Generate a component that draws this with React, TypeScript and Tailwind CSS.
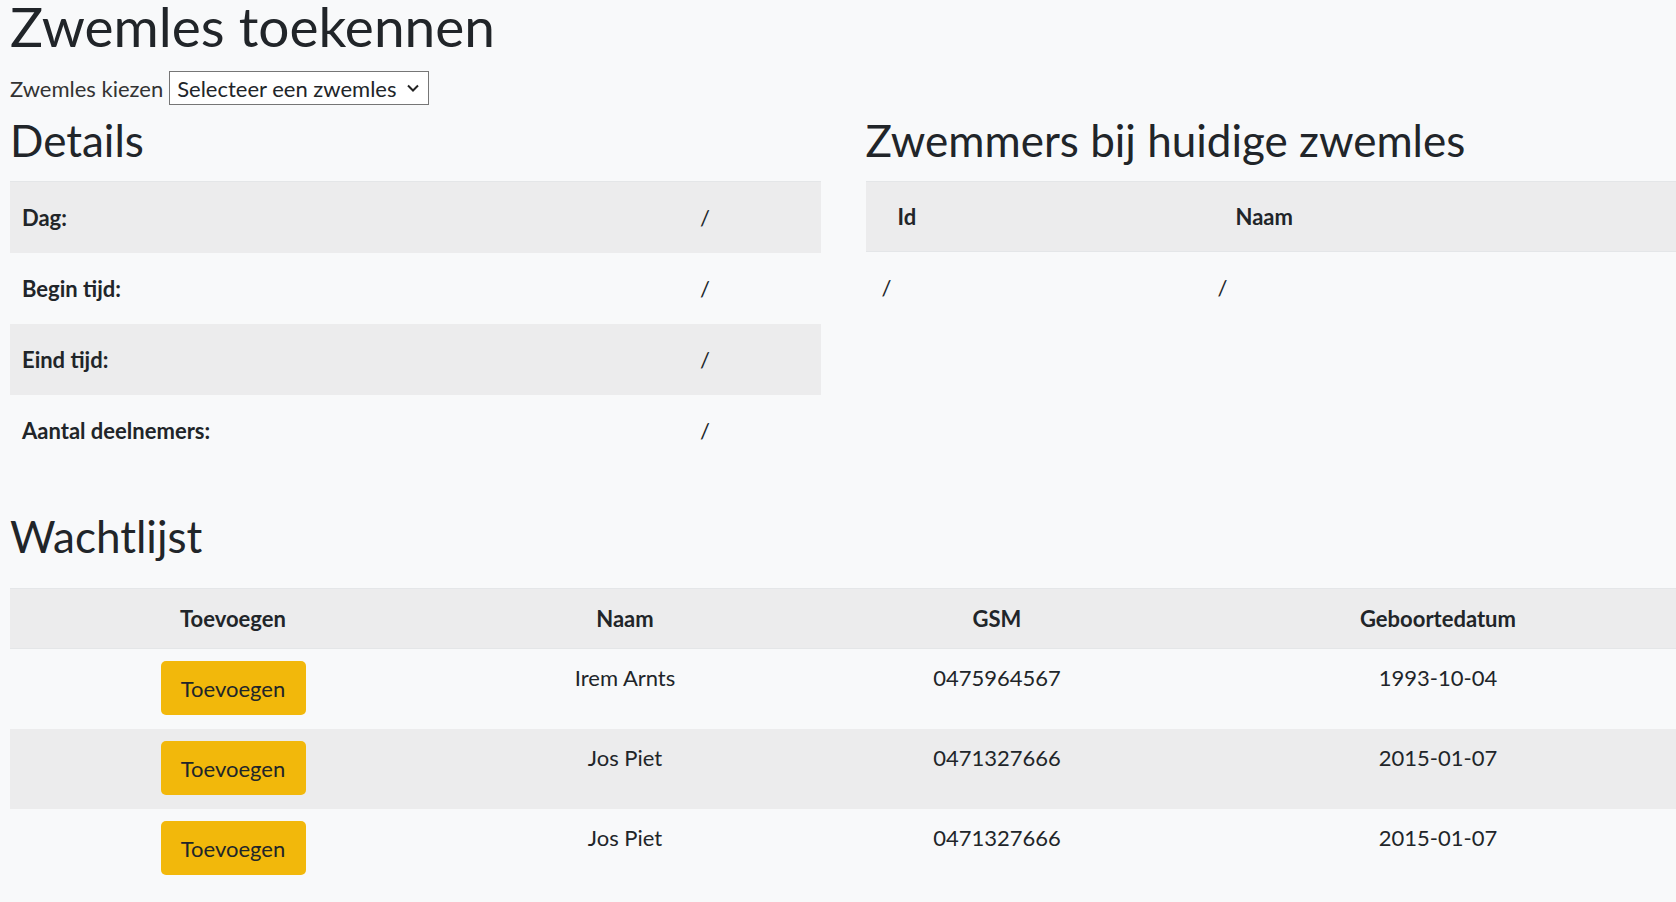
import React from 'react';

interface WachtItem {
  id: number;
  naam: string;
  gsm: string;
  geboortedatum: string;
}

const wachtlijst: WachtItem[] = [
  { id: 1, naam: 'Irem Arnts', gsm: '0475964567', geboortedatum: '1993-10-04' },
  { id: 2, naam: 'Jos Piet', gsm: '0471327666', geboortedatum: '2015-01-07' },
  { id: 3, naam: 'Jos Piet', gsm: '0471327666', geboortedatum: '2015-01-07' },
];

const details = ['Dag:', 'Begin tijd:', 'Eind tijd:', 'Aantal deelnemers:'];

export default function App() {
  return (
    <div
      className="min-h-screen bg-[#f8f9fa] pl-[10px] text-[#212529] text-[22px]"
      style={{ fontFamily: 'Lato, "Noto Sans", sans-serif' }}
    >
      <h1 className="text-[55px] leading-[52px] font-normal mb-[19px]">Zwemles toekennen</h1>

      <div className="flex items-center gap-[6px] h-[34px]">
        <label className="font-normal text-[#333]">Zwemles kiezen</label>
        <div className="flex items-center justify-between w-[260px] h-[34px] border border-[#767676] bg-white pl-[7px] pr-[9px]">
          <span>Selecteer een zwemles</span>
          <svg width="12" height="8" viewBox="0 0 12 8" fill="none">
            <path d="M1 1.5l5 5 5-5" stroke="#222" strokeWidth="2" />
          </svg>
        </div>
      </div>

      <div className="grid grid-cols-2 gap-[45px] mt-[11px]">
        <div>
          <h2 className="text-[44px] leading-[1.1] font-normal mb-[17px]">Details</h2>
          <table className="w-full border-collapse border-t border-[#e4e6e8]">
            <tbody>
              {details.map((d, i) => (
                <tr key={d} className={i % 2 === 0 ? 'bg-[#ececed]' : ''}>
                  <td className="w-[678px] h-[71px] pl-[12px] font-bold align-middle">{d}</td>
                  <td className="h-[71px] pl-[12px] align-middle">/</td>
                </tr>
              ))}
            </tbody>
          </table>
        </div>
        <div>
          <h2 className="text-[44px] leading-[1.1] font-normal mb-[17px]">Zwemmers bij huidige zwemles</h2>
          <table className="w-full border-collapse border-t border-[#e4e6e8]">
            <thead>
              <tr className="bg-[#ececed] border-b border-[#e4e6e8]">
                <th className="w-[334px] h-[70px] pl-[32px] text-left font-bold">Id</th>
                <th className="h-[70px] pl-[36px] text-left font-bold">Naam</th>
              </tr>
            </thead>
            <tbody>
              <tr>
                <td className="h-[71px] pl-[16px]">/</td>
                <td className="h-[71px] pl-[18px]">/</td>
              </tr>
            </tbody>
          </table>
        </div>
      </div>

      <h2 className="text-[44px] leading-[1.1] font-normal mt-[46px] mb-[28px]">Wachtlijst</h2>
      <table className="w-full border-collapse border-t border-[#e4e6e8] table-fixed">
        <thead>
          <tr className="bg-[#ececed] border-b border-[#e4e6e8]">
            <th className="w-[446px] h-[60px] font-bold text-center">Toevoegen</th>
            <th className="w-[338px] h-[60px] font-bold text-center">Naam</th>
            <th className="w-[406px] h-[60px] font-bold text-center">GSM</th>
            <th className="h-[60px] font-bold text-center">Geboortedatum</th>
          </tr>
        </thead>
        <tbody>
          {wachtlijst.map((w, i) => (
            <tr key={w.id} className={i % 2 === 1 ? 'bg-[#ececed]' : ''}>
              <td className="text-center align-top pt-[12px] pb-[14px]">
                <button className="bg-[#f2b80b] rounded-[5px] w-[145px] h-[54px]">Toevoegen</button>
              </td>
              <td className="text-center align-top pt-[12px]">{w.naam}</td>
              <td className="text-center align-top pt-[12px]">{w.gsm}</td>
              <td className="text-center align-top pt-[12px]">{w.geboortedatum}</td>
            </tr>
          ))}
        </tbody>
      </table>
    </div>
  );
}
